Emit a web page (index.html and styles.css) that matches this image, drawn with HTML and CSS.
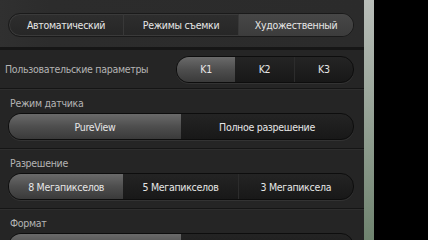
FILE: index.html
```html
<!DOCTYPE html>
<html>
<head>
<meta charset="utf-8">
<link rel="stylesheet" href="styles.css">
</head>
<body>
<div class="screen">
  <div class="panel">
    <div class="topbar">
      <div class="seg seg-top">
        <div class="opt">Автоматический</div>
        <div class="opt">Режимы съемки</div>
        <div class="opt on">Художественный</div>
      </div>
    </div>
    <div class="custom">
      <div class="label-inline">Пользовательские параметры</div>
      <div class="seg seg-k">
        <div class="opt on">K1</div>
        <div class="opt">K2</div>
        <div class="opt">K3</div>
      </div>
    </div>
    <div class="section">
      <div class="label">Режим датчика</div>
      <div class="seg">
        <div class="opt on">PureView</div>
        <div class="opt">Полное разрешение</div>
      </div>
    </div>
    <div class="section">
      <div class="label">Разрешение</div>
      <div class="seg">
        <div class="opt on">8 Мегапикселов</div>
        <div class="opt">5 Мегапикселов</div>
        <div class="opt">3 Мегапиксела</div>
      </div>
    </div>
    <div class="section">
      <div class="label">Формат</div>
      <div class="seg">
        <div class="opt on"></div>
        <div class="opt"></div>
      </div>
    </div>
  </div>
  <div class="edge"></div>
  <div class="void"></div>
</div>
</body>
</html>
```
FILE: styles.css
```css
html, body {
  margin: 0;
  padding: 0;
  background: #000;
}
body {
  width: 428px;
  height: 240px;
  overflow: hidden;
  font-family: "DejaVu Sans Condensed", "DejaVu Sans", sans-serif;
  color: #e4e4e4;
}
.screen {
  display: flex;
  height: 240px;
}
.panel {
  width: 364px;
  background: #252525;
  display: flex;
  flex-direction: column;
  overflow: hidden;
}
.panel > * {
  flex-shrink: 0;
}
.edge {
  width: 10px;
  background: linear-gradient(to bottom, #b9beb9 0%, #98a498 45%, #6f836f 100%);
}
.void {
  flex: 1;
  background: #000;
}
.topbar {
  height: 50px;
  padding: 13px 10px 0 8px;
  box-sizing: border-box;
  background: linear-gradient(to right, #303030 0, #2c2c2c 50px, #2b2b2b 100%);
  border-bottom: 3px solid #161616;
}
.custom {
  display: flex;
  align-items: center;
  justify-content: space-between;
  height: 38px;
  padding: 0 10px 0 5px;
  border-bottom: 1px solid #151515;
  box-shadow: 0 1px 0 #2e2e2e;
}
.label-inline {
  font-size: 10.5px;
  letter-spacing: -0.3px;
  white-space: nowrap;
  color: #b4b4b4;
}
.section {
  padding: 7px 10px 8px 8px;
  border-bottom: 1px solid #151515;
  box-shadow: 0 1px 0 #2e2e2e;
}
.label {
  font-size: 10.5px;
  letter-spacing: -0.3px;
  line-height: 15px;
  color: #b4b4b4;
  padding-left: 2px;
  height: 15px;
  margin-bottom: 2px;
}
.seg {
  display: flex;
  height: 25px;
  border-radius: 13px;
  border: 1px solid #0d0d0d;
  overflow: hidden;
  background: linear-gradient(to bottom, #242424, #181818);
  box-shadow: 0 1px 0 #333;
}
.seg-top {
  height: 22px;
  border-color: #1a1a1a;
  background: linear-gradient(to bottom, #2e2e2e, #262626);
  box-shadow: inset 0 0 0 1px #3a3a3a;
}
.seg-k {
  width: 176px;
}
.opt {
  flex: 1;
  display: flex;
  align-items: center;
  justify-content: center;
  font-size: 10.5px;
  letter-spacing: -0.3px;
  white-space: nowrap;
  color: #e6e6e6;
  border-left: 1px solid #2c2c2c;
}
.opt:first-child {
  border-left: none;
}
.opt.on {
  background: linear-gradient(to bottom, #6a6a6a 0%, #4e4e4e 50%, #3a3a3a 100%);
  border-left: none;
}
.opt.on + .opt {
  border-left: none;
}
.seg-top .opt {
  border-left: 1px solid #383838;
}
.seg-top .opt:first-child {
  border-left: none;
}
.seg-top .opt.on {
  background: linear-gradient(to bottom, #474747, #3c3c3c);
}
```
